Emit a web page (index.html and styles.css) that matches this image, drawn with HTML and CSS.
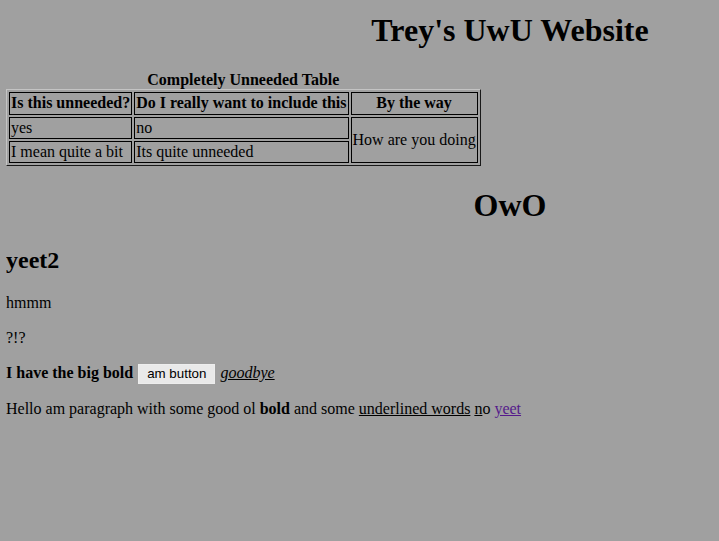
FILE: index.html
```html
<!DOCTYPE html>
<html>
<head>
<meta charset="utf-8">
<title>Trey's UwU Website</title>
<link rel="stylesheet" href="styles.css">
</head>
<body>
<h1 class="title offset-center">Trey's UwU Website</h1>
<table class="tbl">
  <caption class="tbl-caption">Completely Unneeded Table</caption>
  <tr>
    <th>Is this unneeded?</th>
    <th>Do I really want to include this</th>
    <th>By the way</th>
  </tr>
  <tr>
    <td>yes</td>
    <td>no</td>
    <td rowspan="2">How are you doing</td>
  </tr>
  <tr>
    <td>I mean quite a bit</td>
    <td>Its quite unneeded</td>
  </tr>
</table>
<h1 class="owo offset-center">OwO</h1>
<h2 class="sub">yeet2</h2>
<p class="para">hmmm</p>
<p class="para">?!?</p>
<p class="para"><b>I have the big bold</b> <button class="btn">am button</button> <i class="under">goodbye</i></p>
<p class="para">Hello am paragraph with some good ol <b>bold</b> and some <span class="under">underlined words</span> <span class="under">n</span>o <a class="link" href="#">yeet</a></p>
</body>
</html>
```
FILE: styles.css
```css
html {
  background: #a0a0a0;
}
body {
  margin: 0 6px 8px 6px;
  font-family: "Liberation Serif", "Times New Roman", serif;
  font-size: 16px;
  line-height: 1.15;
  color: #000;
  background: #a0a0a0;
}
.offset-center {
  text-align: center;
  padding-left: 301px;
}
.title {
  font-size: 32px;
  font-weight: bold;
  margin: 12px 0 22px 0;
}
.tbl {
  border: 1px outset #808080;
  border-color: #c4c4c4 #6e6e6e #6e6e6e #c4c4c4;
  border-spacing: 2px;
}
.tbl-caption {
  font-weight: bold;
}
.tbl th,
.tbl td {
  border: 1px solid #000;
  padding: 1px;
}
.tbl td {
  text-align: left;
}
.owo {
  font-size: 32px;
  margin: 21px 0 23px 0;
}
.sub {
  font-size: 24px;
  margin: 20px 0 19px 0;
}
.para {
  margin: 16.6px 0;
}
.btn {
  font-family: "Liberation Sans", Arial, sans-serif;
  font-size: 13.33px;
  line-height: normal;
  background: #e9e9e9;
  border: 1px solid #ededed;
  padding: 1px 8px 2px 8px;
  color: #000;
  margin: 0 1px;
}
.under {
  text-decoration: underline;
}
.link {
  color: #551a8b;
  text-decoration: underline;
}
```
